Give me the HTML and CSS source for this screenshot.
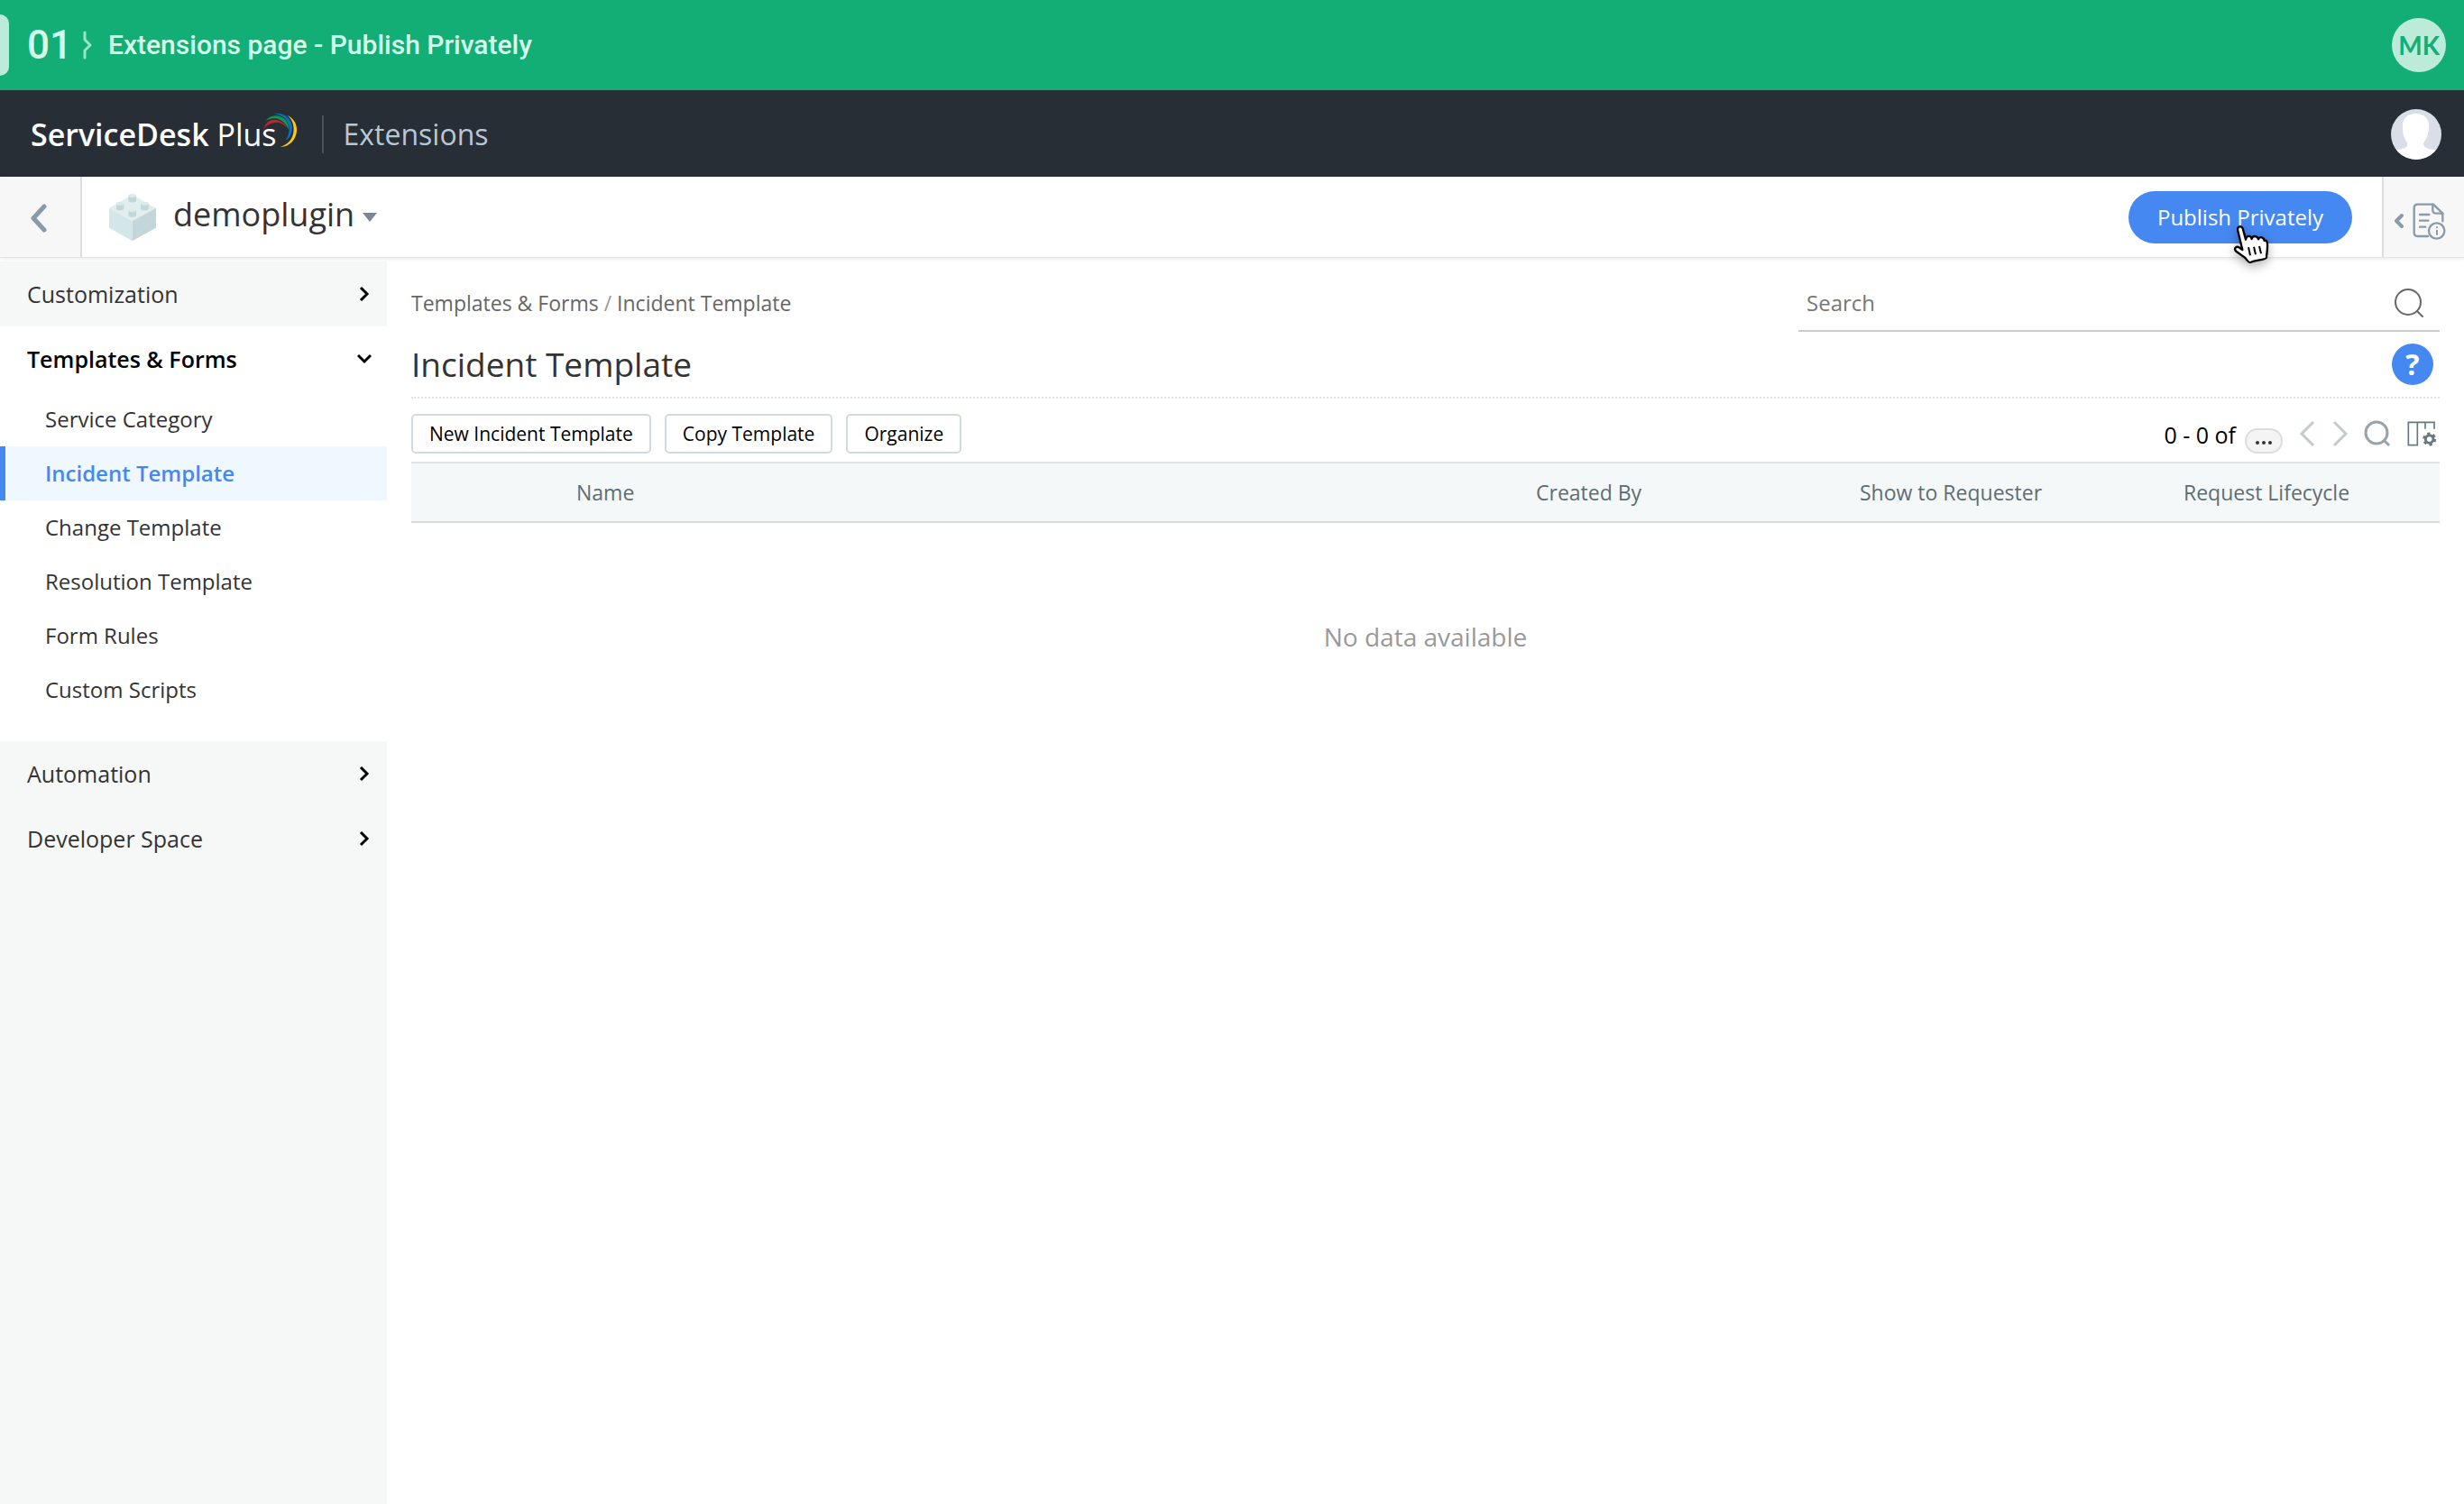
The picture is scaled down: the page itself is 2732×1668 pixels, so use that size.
FILE: index.html
```html
<!DOCTYPE html>
<html lang="en">
<head>
<meta charset="utf-8">
<title>Extensions - ServiceDesk Plus</title>
<link rel="stylesheet" href="styles.css">
</head>
<body>
<div class="guide">
  <span class="guide-tab"></span>
  <span class="guide-step">01</span>
  <svg class="guide-brace" width="10" height="32" viewBox="0 0 10 32" fill="none" stroke="currentColor" stroke-width="3" stroke-linecap="round" stroke-linejoin="round" aria-hidden="true"><path d="M2 2v8l6 6-6 6v8"/></svg>
  <span class="guide-title">Extensions page - Publish Privately</span>
  <span class="guide-user">MK</span>
</div>

<header class="topbar">
  <a class="brand" href="#"><b>ServiceDesk</b> Plus
    <svg class="brand-arcs" width="40" height="40" viewBox="540 40 120 120" aria-hidden="true">
      <path fill="#c8202f" d="M547 103C548 75 575 60 597 69C612 74 620 82 623 92C610 76 590 72 578 77C560 82 550 90 547 103z"/>
      <path fill="#0e9a48" d="M551 72C570 48 600 46 620 68C628 78 630 90 630 100C622 80 605 63 585 62C570 62 558 66 551 72z"/>
      <path fill="#0a6fb8" d="M580 46C615 40 640 62 642 90C642 115 632 128 620 135C634 115 636 90 622 68C612 54 598 48 580 46z"/>
      <path fill="#ffcb05" d="M625 51C650 62 658 85 657 102C655 135 630 158 602 156C628 150 646 130 647 100C647 80 640 62 625 51z"/>
    </svg>
  </a>
  <span class="topbar-section">Extensions</span>
  <svg class="avatar" width="58" height="58" viewBox="0 0 58 58" role="img" aria-label="Profile">
    <defs><clipPath id="avatar-clip"><circle cx="29" cy="29" r="28"/></clipPath></defs>
    <circle cx="29" cy="29" r="28" fill="#dadee9"/>
    <path clip-path="url(#avatar-clip)" fill="#fff" d="M29 6c9 0 15 6 14 16 0 7-3 12-6 17 0 3 2 5 6 6l10 2v11H4V47l10-2c4-1 6-3 5-7-3-4-5-9-5-16C13 12 19 6 29 6z"/>
  </svg>
</header>

<div class="pluginbar">
  <button class="back" aria-label="Back"><svg width="20" height="32" viewBox="0 0 20 32" fill="none" stroke="currentColor" stroke-width="5" stroke-linecap="round" stroke-linejoin="round"><path d="M16 3L4 16l12 13"/></svg></button>
  <button class="plugin">
    <svg width="54" height="54" viewBox="33 310 162 162" aria-hidden="true">
      <path fill="#e0eeee" d="M33 360L110 316L189 360L110 404z"/>
      <path fill="#d3e6e8" d="M33 360L110 404V470L33 426z"/>
      <path fill="#c3d6d9" d="M189 360L110 404V470L189 426z"/>
      <g fill="#c3d6d9"><path d="M97 319h26v18c-5 6-21 6-26 0zM57 345h25v18c-5 6-20 6-25 0zM138 345h26v18c-5 6-21 6-26 0zM97 368h26v18c-5 6-21 6-26 0z"/></g>
      <g fill="#dceaea"><ellipse cx="110" cy="319" rx="13" ry="6"/><ellipse cx="69" cy="345" rx="13" ry="6"/><ellipse cx="151" cy="345" rx="13" ry="6"/><ellipse cx="110" cy="368" rx="13" ry="6"/></g>
    </svg>
    <span>demoplugin</span>
    <svg class="caret" width="16" height="10" viewBox="0 0 16 10" aria-hidden="true"><path fill="#7a8694" d="M0 0h16L8 10z"/></svg>
  </button>
  <div class="publish-wrap">
    <button class="publish">Publish Privately</button>
    <svg class="cursor" width="42" height="45" viewBox="46 118 126 135" aria-hidden="true">
      <path fill="#fff" stroke="#000" stroke-width="7" stroke-linejoin="round" d="M65 140C60 122 79 120 82 134L91 168C93 153 108 154 111 166C114 153 130 155 133 167C138 156 152 160 153 172C160 168 163 176 163 184C164 205 160 215 160 228C160 234 130 236 106 244C100 246 96 236 88 228L60 208C50 200 58 188 68 194L80 202z"/>
      <path fill="none" stroke="#000" stroke-width="6" d="M100 194l6 27M118 192l6 26M136 190l6 25"/>
    </svg>
  </div>
  <button class="notes" aria-label="Details">
    <svg width="10" height="18" viewBox="0 0 10 18" fill="none" stroke="currentColor" stroke-width="4" stroke-linecap="round" stroke-linejoin="round"><path d="M8 3L2 9l6 6"/></svg>
    <svg width="38" height="42" viewBox="645 42 114 126" fill="none" stroke="currentColor" stroke-width="7" stroke-linecap="round" stroke-linejoin="round"><path d="M696 156H662Q650 156 650 144V62Q650 50 662 50H714L745 80V106"/><path d="M712 50V68Q712 80 724 80H745"/><path d="M669 84H700M669 104H697M669 125H688"/><circle cx="725" cy="138" r="26"/><path stroke-width="6" d="M726 137V150M726 126V127"/></svg>
  </button>
</div>

<div class="page">
  <nav class="sidebar">
    <a class="group" href="#">Customization<svg width="12" height="18" viewBox="0 0 12 18"><path d="M2 2l7 7-7 7"/></svg></a>
    <div class="open">
      <a class="group current" href="#">Templates &amp; Forms<svg width="18" height="12" viewBox="0 0 18 12"><path d="M2 2l7 7 7-7"/></svg></a>
      <div class="items">
        <a class="item" href="#">Service Category</a>
        <a class="item active" href="#">Incident Template</a>
        <a class="item" href="#">Change Template</a>
        <a class="item" href="#">Resolution Template</a>
        <a class="item" href="#">Form Rules</a>
        <a class="item" href="#">Custom Scripts</a>
      </div>
    </div>
    <a class="group" href="#">Automation<svg width="12" height="18" viewBox="0 0 12 18"><path d="M2 2l7 7-7 7"/></svg></a>
    <a class="group" href="#">Developer Space<svg width="12" height="18" viewBox="0 0 12 18"><path d="M2 2l7 7-7 7"/></svg></a>
  </nav>

  <main class="content">
    <div class="crumb-row">
      <div class="crumbs"><a href="#">Templates &amp; Forms</a> <i>/</i> <a href="#">Incident Template</a></div>
      <label class="search">
        <input type="text" placeholder="Search" aria-label="Search">
        <svg width="32" height="34" viewBox="0 0 32 34" fill="none" stroke="currentColor" stroke-width="2" stroke-linecap="round"><circle cx="15" cy="16" r="14"/><path d="M25 26l6 6"/></svg>
      </label>
    </div>
    <div class="title-row">
      <h1>Incident Template</h1>
      <button class="help" aria-label="Help">?</button>
    </div>
    <div class="tools">
      <button class="tool">New Incident Template</button>
      <button class="tool">Copy Template</button>
      <button class="tool">Organize</button>
      <div class="pager">
        <span class="range">0 - 0 of</span>
        <button class="count" aria-label="Show total"><svg width="20" height="6" viewBox="0 0 20 6" fill="#333"><circle cx="3" cy="3" r="2"/><circle cx="10" cy="3" r="2"/><circle cx="17" cy="3" r="2"/></svg></button>
        <button class="icon faint" aria-label="Previous"><svg width="18" height="30" viewBox="0 0 18 30"><path d="M16 2L3 15l13 13"/></svg></button>
        <button class="icon faint" aria-label="Next"><svg width="18" height="30" viewBox="0 0 18 30"><path d="M3 2l13 13L3 28"/></svg></button>
        <button class="icon" aria-label="Search list"><svg width="30" height="30" viewBox="0 0 30 30"><circle cx="14" cy="14" r="12"/><path d="M22 22l6 6"/></svg></button>
        <button class="icon dark" aria-label="Columns"><svg width="33" height="28" viewBox="148 84 99 84"><path stroke-width="5" d="M238 110V88H152V164H182V88M208 88V110"/><circle cx="222" cy="144" r="13" stroke-width="9"/><circle cx="222" cy="144" r="19" stroke-width="7" stroke-dasharray="10 9.9"/></svg></button>
      </div>
    </div>
    <table>
      <colgroup><col class="c-check"><col><col class="c-mid"><col class="c-mid"><col class="c-last"></colgroup>
      <thead><tr><td></td><th>Name</th><th>Created By</th><th>Show to Requester</th><th>Request Lifecycle</th></tr></thead>
      <tbody><tr><td class="empty" colspan="5">No data available</td></tr></tbody>
    </table>
  </main>
</div>
</body>
</html>
```
FILE: styles.css
```css
* { box-sizing: border-box; }

body {
  margin: 0;
  min-height: 100vh;
  display: flex;
  flex-direction: column;
  background: #fff;
  color: #333;
  font: 24px/32px "Open Sans", sans-serif;
}

a { color: inherit; text-decoration: none; }
button { margin: 0; padding: 0; border: 0; background: none; color: inherit; font: inherit; }
svg { display: block; flex: none; }

/* guide strip */
.guide {
  display: flex;
  align-items: center;
  height: 100px;
  padding-right: 20px;
  background: #13ad76;
  color: #d5fbe9;
  font-family: Roboto, sans-serif;
  font-weight: 500;
}
.guide-tab { width: 10px; height: 68px; border-radius: 0 10px 10px 0; background: #bcebd9; }
.guide-step { width: 62px; margin-left: 20px; font-size: 44px; }
.guide-brace { color: #9be3c5; }
.guide-title { margin-left: 18px; font-size: 30px; }
.guide-user {
  width: 60px;
  margin-left: auto;
  border-radius: 50%;
  background: #bcebd9;
  color: #13ad76;
  font-family: Lato, sans-serif;
  font-size: 28px;
  font-weight: 700;
  line-height: 60px;
  text-align: center;
}

/* product bar */
.topbar { display: flex; align-items: center; height: 96px; padding: 1px 24px 0 34px; background: #272e36; }
.brand { position: relative; padding-right: 50px; border-right: 2px solid #4b535c; color: #fff; font-size: 34px; line-height: 42px; }
.brand b { font-weight: 600; }
.brand-arcs { position: absolute; top: -4px; right: 27px; }
.topbar-section { margin-left: 22px; color: #b8c7d6; font-size: 32px; line-height: 42px; }
.avatar { margin-left: auto; }

/* plugin bar */
.pluginbar {
  position: relative;
  display: flex;
  align-items: stretch;
  height: 90px;
  margin-bottom: 4px;
  background: #fff;
  border-bottom: 1px solid #e6e6e6;
  box-shadow: 0 1px 4px rgba(0, 0, 0, 0.1);
}
.back { display: flex; align-items: center; justify-content: center; width: 91px; padding: 2px 3px 0 0; border-right: 2px solid #ddd; background: #f7f7f7; color: #8b9aa8; }
.plugin { display: flex; align-items: center; margin-left: 30px; color: #333; font-size: 36px; }
.plugin span { margin: 0 9px 5px 17px; }
.publish-wrap { position: relative; align-self: center; margin: 0 33px 0 auto; }
.publish { width: 248px; height: 58px; border-radius: 29px; background: #4688f1; color: #fff; }
.cursor { position: absolute; top: 37px; left: 115px; filter: drop-shadow(0 4px 6px rgba(0, 0, 0, 0.3)); }
.notes { display: flex; align-items: center; gap: 10px; width: 91px; padding: 8px 0 0 12px; border-left: 2px solid #ddd; background: #f7f7f7; color: #8b9aa8; }

/* page */
.page { flex: 1; display: flex; }
.sidebar { width: 429px; flex: none; background: #f6f8f8; }
.open { background: #fff; }
.items { padding: 1px 0 27px; }
.group { display: flex; align-items: center; justify-content: space-between; height: 72px; padding: 0 16px 0 30px; font-size: 25px; }
.group svg { width: 18px; fill: none; stroke: #000; stroke-width: 3; }
.current { color: #000; font-weight: 600; }
.item { display: block; height: 60px; padding-left: 50px; line-height: 60px; }
.active { padding-left: 44px; border-left: 6px solid #4688f1; background: #f0f8ff; color: #4688f1; font-weight: 600; }

.content { flex: 1; padding: 0 27px; }
.crumb-row { display: flex; align-items: flex-end; justify-content: space-between; height: 78px; }
.crumbs { color: #666; font-size: 23px; line-height: 64px; }
.crumbs i { color: #999; font-style: normal; }
.search { display: flex; align-items: center; width: 711px; height: 64px; padding: 1px 18px 0 9px; border-bottom: 2px solid #ccc; color: #666; }
.search input { flex: 1; padding: 0; border: 0; outline: 0; background: none; font: inherit; }
.search input::placeholder { color: #777; opacity: 1; }
.title-row { display: flex; align-items: center; justify-content: space-between; height: 74px; padding-right: 7px; border-bottom: 2px dotted #e4e4e4; }
h1 { margin: 0; font-size: 37px; font-weight: 400; }
.help { width: 46px; height: 46px; border-radius: 50%; background: #4688f1; color: #fff; font-size: 32px; font-weight: 700; }
.tools { display: flex; align-items: center; gap: 15px; height: 70px; padding-top: 7px; }
.tool { height: 44px; padding: 0 18px; border: 2px solid #d3dadf; border-radius: 5px; color: #000; font-size: 21px; line-height: 32px; }
.pager { display: flex; align-items: center; margin-left: auto; color: #000; font-size: 25px; }
.range { padding-top: 2px; }
.count { display: flex; align-items: center; justify-content: center; width: 42px; height: 28px; margin: 16px 18px 0 10px; padding-top: 4px; border: 2px solid #ddd; border-radius: 14px; background: #f4f4f4; }
.icon { margin-right: 18px; color: #97a3a8; }
.icon svg { fill: none; stroke: currentColor; stroke-width: 3; }
.faint { color: #c3cacc; }
.dark { margin-right: 3px; color: #6a787e; }

table { width: 100%; border-collapse: collapse; table-layout: fixed; }
.c-check { width: 166px; }
.c-mid { width: 359px; }
.c-last { width: 301px; }
thead tr { height: 66px; border-top: 2px solid #e0e4e4; border-bottom: 2px solid #d8dbdc; background: #f5f8f9; }
th { padding: 0 17px; color: #5d6d74; font-size: 23px; font-weight: 400; text-align: left; }
.empty { height: 252px; padding: 0; color: #999; font-size: 28px; text-align: center; }
```
